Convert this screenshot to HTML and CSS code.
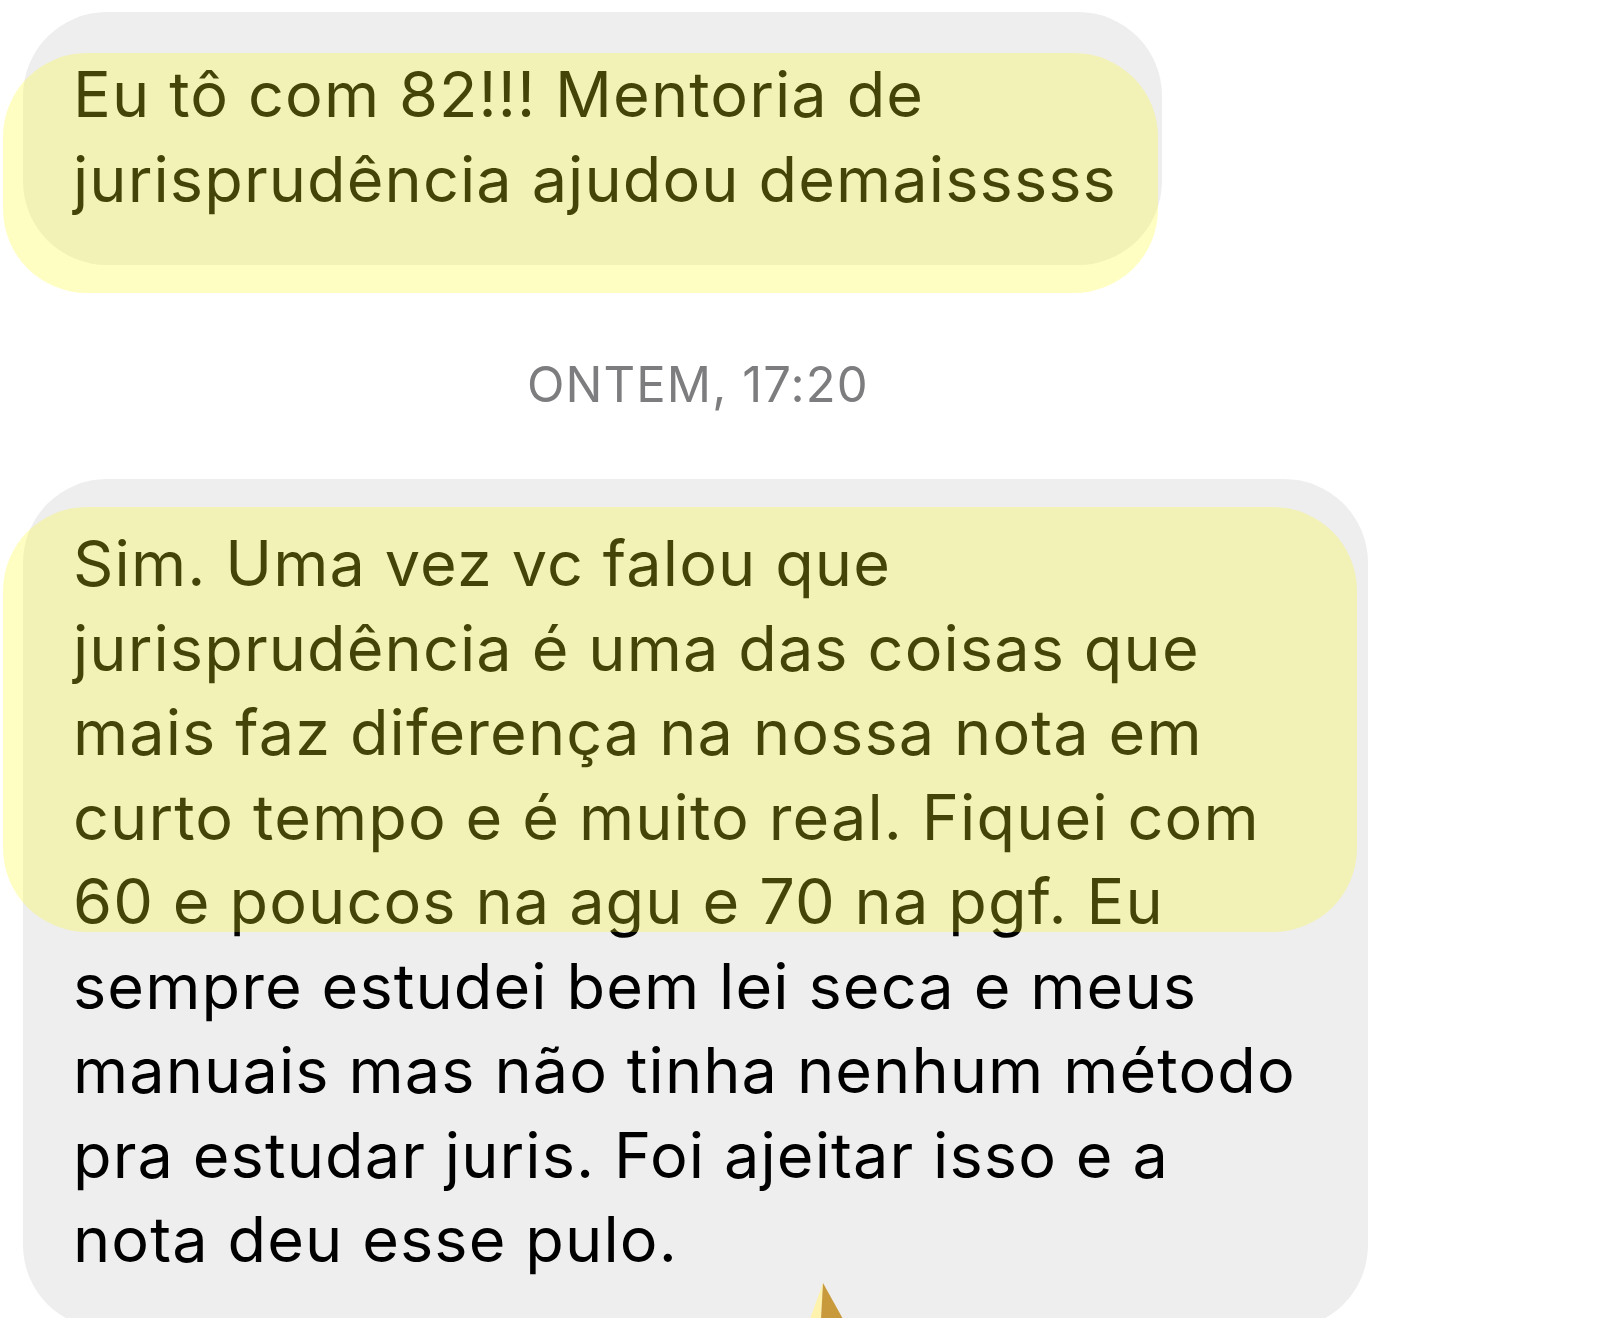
FILE: index.html
```html
<!DOCTYPE html>
<html>
  <head>
    <title>mensagens</title>
    <link rel="stylesheet" href="styles.css">
  </head>
  <body>
    <div class="thread">
      <div class="bubble bubble-short">
        Eu tô com 82!!! Mentoria de<br>
        jurisprudência ajudou demaisssss
      </div>

      <div class="stamp">ONTEM, 17:20</div>

      <div class="bubble bubble-long">
        Sim. Uma vez vc falou que<br>
        jurisprudência é uma das coisas que<br>
        mais faz diferença na nossa nota em<br>
        curto tempo e é muito real. Fiquei com<br>
        60 e poucos na agu e 70 na pgf. Eu<br>
        sempre estudei bem lei seca e meus<br>
        manuais mas não tinha nenhum método<br>
        pra estudar juris. Foi ajeitar isso e a<br>
        nota deu esse pulo.
      </div>

      <!-- marca-texto por cima das mensagens -->
      <div class="mark mark-one"></div>
      <div class="mark mark-two"></div>

      <svg class="pointer" width="40" height="36" viewBox="0 0 40 36">
        <polygon points="16,0 3,36 14,36" fill="#fff2ad"></polygon>
        <polygon points="16,0 14,36 36,36" fill="#c99a3c"></polygon>
      </svg>
    </div>
  </body>
</html>
```

FILE: styles.css
```css
html {
  overflow: hidden;
}

body {
  margin: 0;
  background-color: #ffffff;
  font-family: Inter, "Liberation Sans", sans-serif;
}

.thread {
  position: relative;
  padding-top: 12px;
}

.bubble {
  box-sizing: border-box;
  margin-left: 23px;
  background-color: #eeeeef;
  border-radius: 84px;
  color: #000000;
  font-size: 63px;
  line-height: 84.5px;
  letter-spacing: 1.1px;
  white-space: nowrap;
}

.bubble-short {
  width: 1139px;
  height: 253px;
  padding: 40px 0 0 50px;
}

.bubble-long {
  width: 1345px;
  height: 850px;
  padding: 42px 0 0 50px;
}

.stamp {
  margin: 85px 0 59px 527px;
  color: #7d7d7f;
  font-size: 49px;
  line-height: 70px;
  letter-spacing: 1.1px;
}

.mark {
  position: absolute;
  left: 3px;
  background-color: rgba(255, 250, 30, 0.27);
  border-radius: 84px;
}

.mark-one {
  top: 53px;
  width: 1155px;
  height: 240px;
}

.mark-two {
  top: 507px;
  width: 1354px;
  height: 425px;
}

.pointer {
  position: absolute;
  left: 807px;
  top: 1283px;
}
```
